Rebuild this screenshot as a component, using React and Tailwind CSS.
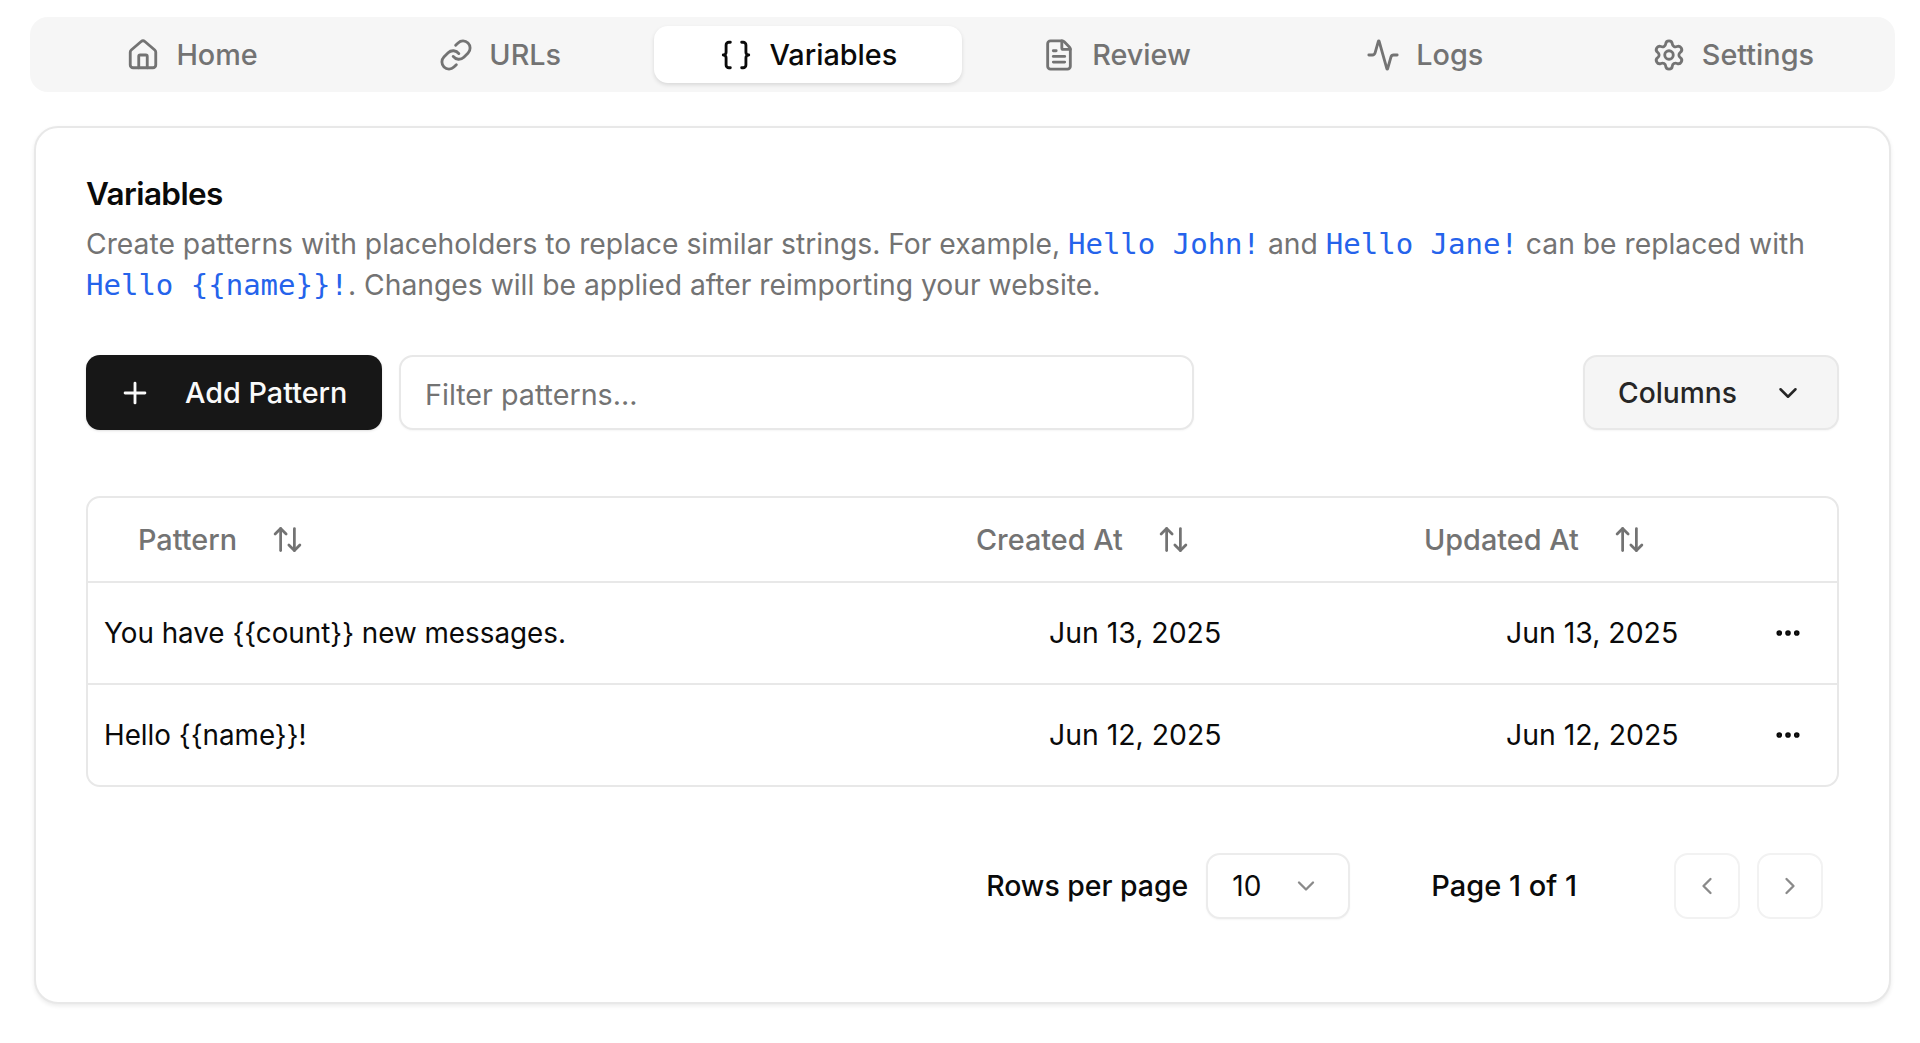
import React from "react";
import { House, Link, Braces, FileText, Activity, Settings, Plus, ChevronDown, ChevronLeft, ChevronRight, ArrowUpDown, Ellipsis } from "lucide-react";

const tabs = [
  { label: "Home", Icon: House },
  { label: "URLs", Icon: Link },
  { label: "Variables", Icon: Braces, active: true },
  { label: "Review", Icon: FileText },
  { label: "Logs", Icon: Activity },
  { label: "Settings", Icon: Settings },
];

const rows = [
  { p: "You have {{count}} new messages.", d: "Jun 13, 2025" },
  { p: "Hello {{name}}!", d: "Jun 12, 2025" },
];

const cols = "grid grid-cols-[862px_450px_320px_1fr]";

function Code({ children }) {
  return <span className="font-['DejaVu_Sans_Mono',monospace] text-[29px] text-[#2563eb]">{children}</span>;
}

function Head({ label, className }) {
  return (
    <div className={`flex items-center text-[28.8px] text-[#737373] font-medium ${className}`}>
      <span>{label}</span>
      <ArrowUpDown className="ml-[34px] w-[33px] h-[33px]" strokeWidth={2} />
    </div>
  );
}

export default function App() {
  return (
    <div className="min-h-[1043px] bg-white pl-[30px] pr-[25px] pt-[17px] font-['Inter',sans-serif] text-[28px] leading-[40px] text-[#0a0a0a]">
      <div className="grid grid-cols-6 h-[75px] rounded-[18px] bg-[#f6f6f6] px-[8px] py-[9px]">
        {tabs.map(({ label, Icon, active }) => (
          <div
            key={label}
            className={`flex items-center justify-center gap-[16px] rounded-[14px] text-[28.8px] font-medium ${
              active ? "bg-white text-[#0a0a0a] shadow-[0_2px_4px_rgba(0,0,0,0.12)]" : "text-[#737373]"
            }`}
          >
            <Icon className="w-[34px] h-[34px]" strokeWidth={2} />
            <span>{label}</span>
          </div>
        ))}
      </div>

      <div className="mx-[4px] mt-[34px] h-[878px] rounded-[24px] border-2 border-[#e8e8e8] bg-white px-[50px] pt-[42px] shadow-[0_2px_4px_rgba(0,0,0,0.08)]">
        <h1 className="text-[31.5px] leading-[48px] font-semibold tracking-[-0.6px]">Variables</h1>
        <p className="mt-[6px] text-[28.28px] text-[#737373] leading-[41px]">
          Create patterns with placeholders to replace similar strings. For example, <Code>Hello John!</Code> and <Code>Hello Jane!</Code> can be replaced with <Code>Hello {"{{name}}"}!</Code>. Changes will be applied after reimporting your website.
        </p>

        <div className="mt-[49px] flex h-[75px] gap-[17px]">
          <button className="flex w-[296px] items-center rounded-[14px] bg-[#171717] pl-[32px] text-[28.8px] font-medium text-[#fafafa] shadow-sm">
            <Plus className="w-[34px] h-[34px]" strokeWidth={2} />
            <span className="ml-[33px]">Add Pattern</span>
          </button>
          <div className="flex w-[795px] items-center rounded-[14px] border-2 border-[#e8e8e8] bg-white pl-[24px] pt-[4px] text-[28.7px] text-[#737373] shadow-[0_1px_2px_rgba(0,0,0,0.04)]">
            Filter patterns...
          </div>
          <button className="ml-auto flex w-[256px] items-center rounded-[14px] border-2 border-[#e8e8e8] bg-[#f5f5f5] pl-[33px] text-[28.2px] font-medium text-[#262626] shadow-[0_1px_2px_rgba(0,0,0,0.04)]">
            <span>Columns</span>
            <ChevronDown className="ml-[36px] w-[30px] h-[30px]" strokeWidth={2} />
          </button>
        </div>

        <div className="mt-[66px] rounded-[14px] border-2 border-[#e8e8e8]">
          <div className={`${cols} h-[85px] items-center border-b-2 border-[#e8e8e8]`}>
            <Head label="Pattern" className="pl-[50px]" />
            <Head label="Created At" className="pl-[26px]" />
            <Head label="Updated At" className="pl-[24px]" />
            <div />
          </div>
          {rows.map((r, i) => (
            <div key={r.p} className={`${cols} ${i === 0 ? "h-[102px] border-b-2 border-[#e8e8e8]" : "h-[100px]"} items-center`}>
              <div className="pl-[16px] text-[27.8px]">{r.p}</div>
              <div className="pl-[99px] text-[28.4px]">{r.d}</div>
              <div className="pl-[106px] text-[28.4px]">{r.d}</div>
              <div className="flex justify-end pr-[34px]">
                <Ellipsis className="w-[30px] h-[30px]" strokeWidth={2.5} />
              </div>
            </div>
          ))}
        </div>

        <div className="mt-[66px] flex h-[66px] items-center justify-end pr-[16px] font-medium">
          <span className="text-[28.4px]">Rows per page</span>
          <div className="ml-[18px] flex h-full w-[144px] items-center rounded-[14px] border-2 border-[#ececec] bg-white pl-[24px] font-normal shadow-[0_1px_2px_rgba(0,0,0,0.04)]">
            <span>10</span>
            <ChevronDown className="ml-[31px] w-[28px] h-[28px] text-[#8a8a8a]" strokeWidth={2} />
          </div>
          <span className="ml-[81px] text-[29px]">Page 1 of 1</span>
          <div className="ml-[97px] flex h-full w-[66px] items-center justify-center rounded-[14px] border-2 border-[#f2f2f2]">
            <ChevronLeft className="w-[28px] h-[28px] text-[#8a8a8a]" strokeWidth={2} />
          </div>
          <div className="ml-[17px] flex h-full w-[66px] items-center justify-center rounded-[14px] border-2 border-[#f2f2f2]">
            <ChevronRight className="w-[28px] h-[28px] text-[#8a8a8a]" strokeWidth={2} />
          </div>
        </div>
      </div>
    </div>
  );
}
